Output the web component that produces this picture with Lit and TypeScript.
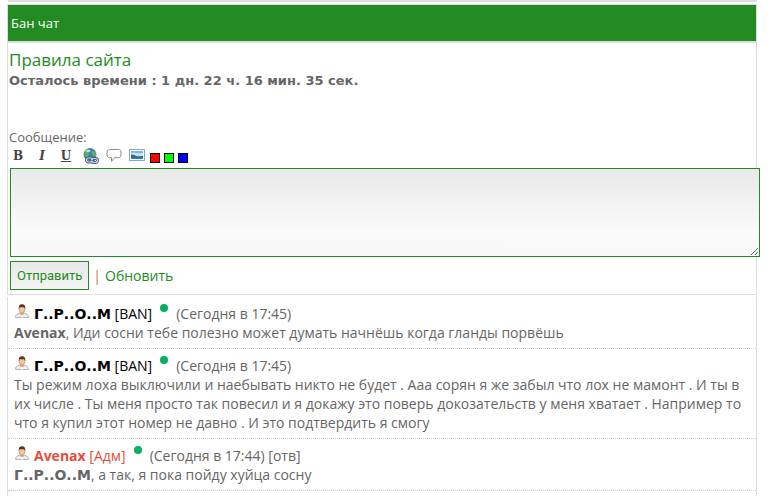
import { LitElement, html, css, svg } from "lit";
import { customElement, property } from "lit/decorators.js";
import { classMap } from "lit/directives/class-map.js";

interface Message {
  author: string;
  tag: string;
  admin?: boolean;
  time: string;
  to?: string;
  lines: string[];
}

const messages: Message[] = [
  {
    author: "Г..Р..О..М",
    tag: "[BAN]",
    time: "(Сегодня в 17:45)",
    to: "Avenax",
    lines: [", Иди сосни тебе полезно может думать начнёшь когда гланды порвёшь"],
  },
  {
    author: "Г..Р..О..М",
    tag: "[BAN]",
    time: "(Сегодня в 17:45)",
    lines: [
      "Ты режим лоха выключили и наебывать никто не будет . Ааа сорян я же забыл что лох не мамонт . И ты в",
      "их числе . Ты меня просто так повесил и я докажу это поверь докозательств у меня хватает . Например то",
      "что я купил этот номер не давно . И это подтвердить я смогу",
    ],
  },
  {
    author: "Avenax",
    tag: "[Адм]",
    admin: true,
    time: "(Сегодня в 17:44) [отв]",
    to: "Г..Р..О..М",
    lines: [", а так, я пока пойду хуйца сосну"],
  },
];

const userIcon = svg`
  <path d="M1.500 13.500c0-2.700 1.500-3.800 4.500-4.300h4c3 .5 4.500 1.600 4.500 4.300z" fill="#eceef0" stroke="#b4b7bb"/>
  <path d="M6 8.500h4v1.500l-2 2-2-2z" fill="#e0a878"/>
  <path d="M7.200 11h1.600l.4 2.500H6.800z" fill="#fff"/>
  <ellipse cx="8" cy="5.300" rx="2.800" ry="3.800" fill="#f2c79c" stroke="#b98a60" stroke-width=".6"/>
  <path d="M4.800 5.500C4.200 2 5.500.3 8 .3s3.800 1.700 3.200 5.200l-.8-2C9.500 3 7 3.600 5.600 3z" fill="#54371f"/>`;

const linkIcon = svg`
  <circle cx="7" cy="6.500" r="6" fill="#3b7fc4" stroke="#2b5f98" stroke-width=".7"/>
  <path d="M2 3.500C4 1 7 .8 8 1.500L7 4 5 5l1 2-2 3C2 9 1 6 2 3.500zM9 3l3 .5c1 2 1 4 .5 5.500L10 8 8.500 5.500z" fill="#5fb552"/>
  <ellipse cx="5" cy="3" rx="2.500" ry="1.300" fill="#d8efff" opacity=".7"/>
  <g fill="none" stroke="#3f5878" stroke-width="2.800"><rect x="3.500" y="10" width="6" height="4" rx="2"/><rect x="8.500" y="10.500" width="6" height="4" rx="2"/></g>
  <g fill="none" stroke="#d7e0ea" stroke-width="1.200"><rect x="3.500" y="10" width="6" height="4" rx="2"/><rect x="8.500" y="10.500" width="6" height="4" rx="2"/></g>
  <path d="M6.500 12.300h5.500" stroke="#5b7392"/>`;

const quoteIcon = svg`
  <path d="M3.500 1.500h9c1.500 0 2.500 1 2.500 2.500v3c0 1.500-1 2.700-2.500 2.700H8.500L5.500 13.500V9.700h-2C2 9.700 1 8.500 1 7V4c0-1.500 1-2.500 2.500-2.500z" fill="#fdfdfd" stroke="#8d8d8d"/>`;

const imageIcon = svg`
  <rect x=".5" y="1.500" width="15" height="11" fill="#fff" stroke="#8ba9c9"/>
  <rect x="2" y="3" width="12" height="8" fill="#78b8e6"/>
  <path d="M2 5.500c3-2 5 1 12-.5V8H2z" fill="#c9e6f8"/>
  <path d="M2 6.500l3 .5 4 1.500 5-.5V9H2z" fill="#2d6678"/>
  <path d="M2 9h12v2H2z" fill="#3976ad"/>`;

@customElement("chat-message")
export class ChatMessage extends LitElement {
  @property({ attribute: false }) message!: Message;

  static styles = css`
    :host {
      display: block;
      padding: 7px 6px 6px;
      border-bottom: 1px dotted #ccc;
    }
    .head,
    .text {
      margin: 0;
      line-height: 19px;
      white-space: nowrap;
    }
    .head {
      display: flex;
      height: 19px;
    }
    .icon {
      width: 16px;
      height: 16px;
      margin-right: 4px;
      flex: none;
    }
    .author {
      color: #000;
      text-decoration: none;
    }
    .admin {
      color: #e74c3c;
    }
    .wide {
      font-family: "Comic Sans MS", "DejaVu Sans", sans-serif;
      line-height: 1;
    }
    .dot {
      width: 8px;
      height: 8px;
      margin: 0 8px;
      border-radius: 50%;
      background: #00b15d;
      flex: none;
    }
  `;

  private nick(name: string) {
    return html`<b class=${classMap({ wide: name.includes("..") })}>${name}</b>`;
  }

  render() {
    const m = this.message;
    return html`
      <p class="head">
        <svg class="icon" viewBox="0 0 16 16" aria-hidden="true">${userIcon}</svg>
        <a href="#" class=${classMap({ author: true, admin: !!m.admin })}>${this.nick(m.author)} ${m.tag}</a>
        <span class="dot"></span>
        <span>${m.time}</span>
      </p>
      <p class="text">${m.to ? this.nick(m.to) : ""}${m.lines.map((l, i) => html`${i ? html`<br />` : ""}${l}`)}</p>
    `;
  }
}

@customElement("app-root")
export class AppRoot extends LitElement {
  static styles = css`
    :host {
      display: flex;
      flex-direction: column;
      box-sizing: border-box;
      min-height: 100vh;
      padding: 0 14px 0 7px;
      background: #fff;
      color: #666;
      font: 14px/19px "Comic Sans MS", "Open Sans", sans-serif;
    }
    .strip {
      height: 2px;
      margin: 0 0 2px 1px;
      background: #ddd;
    }
    .title {
      margin: 0;
      padding: 0 3px;
      border: 1px solid #ddd;
      background: #228b22;
      color: #fff;
      font-size: 13px;
      font-weight: 400;
      line-height: 36px;
    }
    .panel {
      border: 1px solid #ddd;
      padding: 6px 1px 4px;
    }
    a {
      color: #228b22;
      text-decoration: none;
    }
    .rules {
      display: block;
      font-size: 17px;
      line-height: 22px;
    }
    .left {
      margin: 0 0 38px;
      font-family: "Comic Sans MS", "DejaVu Sans", sans-serif;
      font-size: 13px;
      font-weight: 700;
      line-height: 19px;
      white-space: nowrap;
    }
    .label {
      display: block;
      font-size: 13px;
      line-height: 19px;
    }
    .tools {
      display: flex;
      height: 21px;
      padding-left: 2px;
    }
    button {
      font: inherit;
      cursor: pointer;
    }
    .tool {
      width: 23px;
      height: 18px;
      padding: 0;
      border: 0;
      background: none;
      color: #444;
    }
    .tool svg {
      display: block;
      width: 16px;
      height: 16px;
    }
    .glyph {
      width: 24px;
      padding-right: 10px;
      font: 700 12px/18px "DejaVu Serif", serif;
      text-align: center;
    }
    .italic {
      font-style: italic;
    }
    .underline {
      text-decoration: underline;
    }
    .swatch {
      width: 10px;
      height: 10px;
      margin: 6px 4px 0 0;
      padding: 0;
      border: 1px solid #000;
    }
    .red {
      margin-left: -2px;
      background: #f00;
    }
    .lime {
      background: #0f0;
    }
    .blue {
      background: #00f;
    }
    .box {
      display: block;
      box-sizing: border-box;
      width: calc(100% + 4px);
      height: 89px;
      margin: 0 0 4px 1px;
      border: 1px solid #228b22;
      background: linear-gradient(#e9e9e9, #fafafa 70%, #f8f8f8);
      font: inherit;
      resize: both;
    }
    .actions {
      display: flex;
      align-items: center;
      gap: 4px;
      padding-left: 1px;
    }
    .send {
      height: 29px;
      padding: 0 6px;
      border: 1px solid #228b22;
      background: linear-gradient(#e9e9e9, #f3f3f3);
      color: #228b22;
      font-family: Roboto, sans-serif;
      font-size: 13px;
    }
    .bar {
      color: #b08050;
    }
    .list {
      flex: 1;
      margin-top: 2px;
      border: solid #ddd;
      border-width: 0 1px;
    }
  `;

  render() {
    return html`
      <div class="strip"></div>
      <h1 class="title">Бан чат</h1>
      <form class="panel" @submit=${(e: Event) => e.preventDefault()}>
        <a href="#" class="rules">Правила сайта</a>
        <p class="left">Осталось времени : 1 дн. 22 ч. 16 мин. 35 сек.</p>
        <label class="label" for="msg">Сообщение:</label>
        <div class="tools">
          <button type="button" class="tool glyph">B</button>
          <button type="button" class="tool glyph italic">I</button>
          <button type="button" class="tool glyph underline">U</button>
          <button type="button" class="tool" aria-label="Ссылка"><svg viewBox="0 0 16 16">${linkIcon}</svg></button>
          <button type="button" class="tool" aria-label="Цитата"><svg viewBox="0 0 16 16">${quoteIcon}</svg></button>
          <button type="button" class="tool" aria-label="Картинка"><svg viewBox="0 0 16 16">${imageIcon}</svg></button>
          <button type="button" class="swatch red" aria-label="Красный"></button>
          <button type="button" class="swatch lime" aria-label="Зелёный"></button>
          <button type="button" class="swatch blue" aria-label="Синий"></button>
        </div>
        <textarea class="box" id="msg"></textarea>
        <div class="actions">
          <button class="send">Отправить</button>
          <span class="bar">|</span>
          <a href="#">Обновить</a>
        </div>
      </form>
      <div class="list">
        ${messages.map((m) => html`<chat-message .message=${m}></chat-message>`)}
      </div>
    `;
  }
}
